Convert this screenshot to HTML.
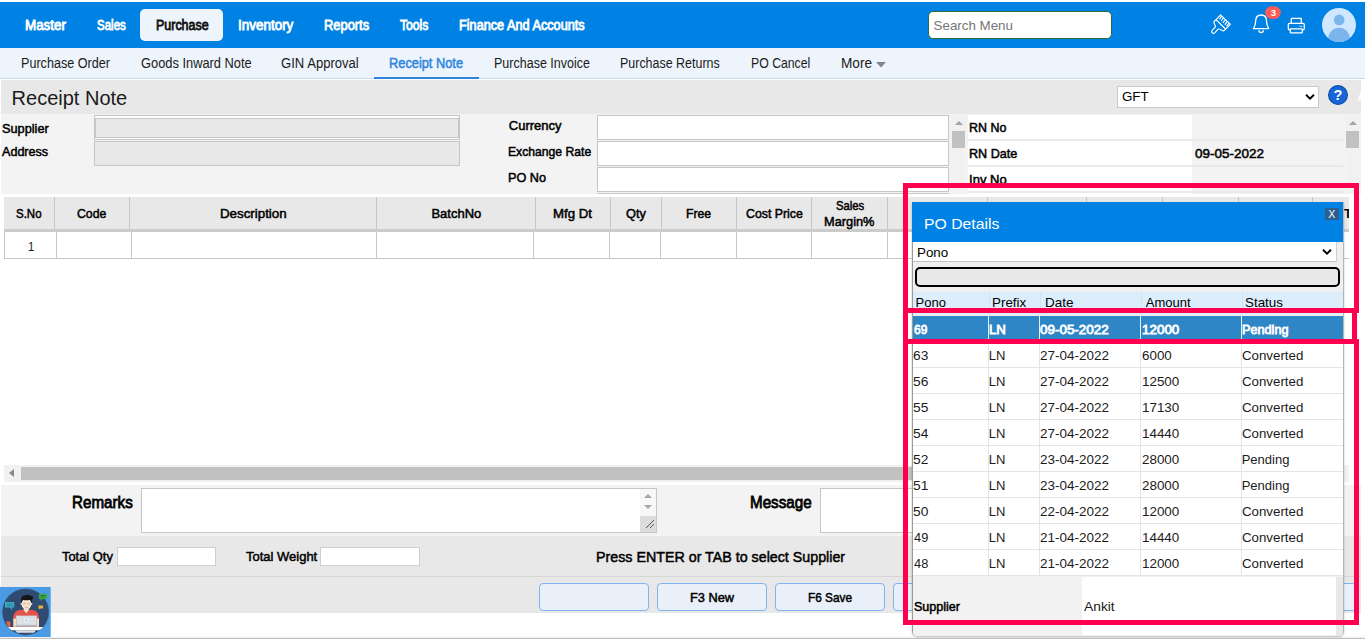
<!DOCTYPE html><html><head><meta charset="utf-8"><title>Receipt Note</title><style>
html,body{margin:0;padding:0;background:#fff;}
body{width:1365px;height:639px;position:relative;overflow:hidden;font-family:'Liberation Sans', sans-serif;}
.b{position:absolute;box-sizing:border-box;}
.t{position:absolute;white-space:pre;line-height:normal;font-family:'Liberation Sans', sans-serif;transform-origin:0 0;}
svg{position:absolute;overflow:visible}
.sb{-webkit-text-stroke:0.5px currentColor;}
.xb{-webkit-text-stroke:0.8px currentColor;}
</style></head><body>
<div class="b" style="left:0px;top:2px;width:1365px;height:46px;background:#0082e4"></div>
<div class="b" style="left:140px;top:9px;width:83px;height:32px;background:#edf4fc;border-radius:5px"></div>
<div class="b" style="left:928px;top:11px;width:184px;height:28px;background:#fff;border:1px solid #2e6b3a;border-radius:5px"></div>
<div class="t" style="left:933.6px;top:18px;font-size:13.33px;color:#757575">Search Menu</div>
<div class="b" style="left:0px;top:48px;width:1365px;height:30px;background:#edf4fc"></div>
<div class="b" style="left:0px;top:78px;width:1365px;height:1px;background:#c9dbe6"></div>
<div class="b" style="left:0px;top:79px;width:1365px;height:1px;background:#fafcfd"></div>
<div class="b" style="left:374px;top:77px;width:105px;height:2px;background:#2e86de"></div>
<svg style="left:875.5px;top:62px" width="10" height="6"><path d="M0 0h10l-5 5.6z" fill="#7d8590"/></svg>
<div class="b" style="left:1px;top:80px;width:1360px;height:34px;background:#e8e8e8"></div>
<div class="b" style="left:1117px;top:86px;width:202px;height:22px;background:#fff;border:1px solid #c9c9c9"></div>
<div class="t" style="left:1122px;top:89px;font-size:13.33px;color:#000">GFT</div>
<svg style="left:1305px;top:94px" width="10" height="6"><path d="M1 0.8L5 4.6L9 0.8" fill="none" stroke="#000" stroke-width="1.9"/></svg>
<svg style="left:1328px;top:85px" width="20" height="20"><circle cx="10" cy="10" r="9.4" fill="#1666d8" stroke="#0e4fae" stroke-width="1.2"/><text x="10" y="15.2" text-anchor="middle" font-family="Liberation Sans, sans-serif" font-weight="700" font-size="14.5" fill="#fff">?</text></svg>
<svg style="left:1357px;top:88px" width="5" height="14"><path d="M4 1.5 L2.8 6 L1 12.6 L4 12.6 Z" fill="#fff"/></svg>
<div class="b" style="left:1px;top:114px;width:1360px;height:80px;background:#f3f3f3"></div>
<div class="b" style="left:94px;top:115px;width:366px;height:25px;background:#fff;border:1px solid #c6c6c6"></div>
<div class="b" style="left:95px;top:118px;width:364px;height:20px;background:#e8e8e8;border:1px solid #c6c6c6"></div>
<div class="b" style="left:94px;top:141px;width:366px;height:25px;background:#e8e8e8;border:1px solid #c6c6c6"></div>
<div class="b" style="left:597px;top:115px;width:352px;height:25px;background:#fff;border:1px solid #c6c6c6"></div>
<div class="b" style="left:597px;top:141px;width:352px;height:25px;background:#fff;border:1px solid #c6c6c6"></div>
<div class="b" style="left:597px;top:167px;width:352px;height:25px;background:#fff;border:1px solid #c6c6c6"></div>
<div class="b" style="left:597px;top:193px;width:352px;height:1px;background:#c6c6c6"></div>
<div class="b" style="left:951px;top:114px;width:15px;height:80px;background:#f1f1f1"></div>
<div class="b" style="left:952px;top:131px;width:13px;height:17px;background:#c1c1c1"></div>
<svg style="left:955px;top:121px" width="8" height="4"><path d="M0 4L4 0L8 4z" fill="#a3a3a3"/></svg>
<div class="b" style="left:968px;top:115px;width:224px;height:24px;background:#fff"></div>
<div class="b" style="left:968px;top:139px;width:375px;height:2px;background:#e9e9e9"></div>
<div class="b" style="left:968px;top:141px;width:224px;height:24px;background:#fff"></div>
<div class="b" style="left:968px;top:165px;width:375px;height:2px;background:#e9e9e9"></div>
<div class="b" style="left:968px;top:167px;width:224px;height:24px;background:#fff"></div>
<div class="b" style="left:968px;top:191px;width:375px;height:2px;background:#e9e9e9"></div>
<div class="b" style="left:968px;top:193px;width:224px;height:1px;background:#fff"></div>
<div class="b" style="left:1346px;top:114px;width:14px;height:80px;background:#f1f1f1"></div>
<div class="b" style="left:1346px;top:131px;width:13px;height:17px;background:#c1c1c1"></div>
<svg style="left:1349px;top:121px" width="8" height="4"><path d="M0 4L4 0L8 4z" fill="#a3a3a3"/></svg>
<div class="b" style="left:4px;top:197px;width:1345px;height:32px;background:#e8e8e8"></div>
<div class="b" style="left:54px;top:197px;width:1px;height:32px;background:#c6c6c6"></div>
<div class="b" style="left:129px;top:197px;width:1px;height:32px;background:#c6c6c6"></div>
<div class="b" style="left:376px;top:197px;width:1px;height:32px;background:#c6c6c6"></div>
<div class="b" style="left:535px;top:197px;width:1px;height:32px;background:#c6c6c6"></div>
<div class="b" style="left:610px;top:197px;width:1px;height:32px;background:#c6c6c6"></div>
<div class="b" style="left:661px;top:197px;width:1px;height:32px;background:#c6c6c6"></div>
<div class="b" style="left:736px;top:197px;width:1px;height:32px;background:#c6c6c6"></div>
<div class="b" style="left:811px;top:197px;width:1px;height:32px;background:#c6c6c6"></div>
<div class="b" style="left:887px;top:197px;width:1px;height:32px;background:#c6c6c6"></div>
<div class="b" style="left:987px;top:197px;width:1px;height:32px;background:#c6c6c6"></div>
<div class="b" style="left:1086px;top:197px;width:1px;height:32px;background:#c6c6c6"></div>
<div class="b" style="left:1162px;top:197px;width:1px;height:32px;background:#c6c6c6"></div>
<div class="b" style="left:1238px;top:197px;width:1px;height:32px;background:#c6c6c6"></div>
<div class="b" style="left:1312px;top:197px;width:1px;height:32px;background:#c6c6c6"></div>
<div class="b" style="left:4px;top:229px;width:1345px;height:3px;background:#cbcbcb"></div>
<div class="b" style="left:4px;top:232px;width:1345px;height:27px;background:#fff;border-left:1px solid #c6c6c6;border-bottom:1px solid #c6c6c6"></div>
<div class="b" style="left:56px;top:232px;width:1px;height:26px;background:#c6c6c6"></div>
<div class="b" style="left:131px;top:232px;width:1px;height:26px;background:#c6c6c6"></div>
<div class="b" style="left:376px;top:232px;width:1px;height:26px;background:#c6c6c6"></div>
<div class="b" style="left:533px;top:232px;width:1px;height:26px;background:#c6c6c6"></div>
<div class="b" style="left:609px;top:232px;width:1px;height:26px;background:#c6c6c6"></div>
<div class="b" style="left:660px;top:232px;width:1px;height:26px;background:#c6c6c6"></div>
<div class="b" style="left:736px;top:232px;width:1px;height:26px;background:#c6c6c6"></div>
<div class="b" style="left:811px;top:232px;width:1px;height:26px;background:#c6c6c6"></div>
<div class="b" style="left:887px;top:232px;width:1px;height:26px;background:#c6c6c6"></div>
<div class="b" style="left:987px;top:232px;width:1px;height:26px;background:#c6c6c6"></div>
<div class="b" style="left:1086px;top:232px;width:1px;height:26px;background:#c6c6c6"></div>
<div class="b" style="left:1162px;top:232px;width:1px;height:26px;background:#c6c6c6"></div>
<div class="b" style="left:1238px;top:232px;width:1px;height:26px;background:#c6c6c6"></div>
<div class="b" style="left:1312px;top:232px;width:1px;height:26px;background:#c6c6c6"></div>
<div class="t" style="left:1344px;top:206px;font-size:13px;font-weight:700;color:#000">Ta</div>
<div class="b" style="left:1349px;top:197px;width:12px;height:40px;background:#fff"></div>
<div class="b" style="left:4px;top:465px;width:1345px;height:17px;background:#f1f1f1"></div>
<div class="b" style="left:21px;top:467px;width:1300px;height:13px;background:#c1c1c1"></div>
<svg style="left:9px;top:469px" width="5" height="8"><path d="M5 0L0 4L5 8z" fill="#8a8a8a"/></svg>
<div class="b" style="left:1px;top:485px;width:1360px;height:51px;background:#f3f3f3"></div>
<div class="b" style="left:141px;top:488px;width:516px;height:45px;background:#fff;border:1px solid #c6c6c6"></div>
<div class="b" style="left:640px;top:489px;width:16px;height:43px;background:#f7f7f7"></div>
<div class="b" style="left:640px;top:516px;width:16px;height:16px;background:#dcdcdc"></div>
<svg style="left:644px;top:494px" width="8" height="16"><path d="M0 4L4 0L8 4z M0 11L4 15L8 11z" fill="#a8a8a8"/></svg>
<svg style="left:645px;top:519px" width="10" height="10"><path d="M1 9L9 1M5 9L9 5" stroke="#555" stroke-width="1" fill="none"/></svg>
<div class="b" style="left:820px;top:488px;width:500px;height:45px;background:#fff;border:1px solid #c6c6c6"></div>
<div class="b" style="left:1px;top:536px;width:1360px;height:41px;background:#e8e8e8"></div>
<div class="b" style="left:1px;top:576px;width:1360px;height:1px;background:#d6d6d6"></div>
<div class="b" style="left:117px;top:547px;width:99px;height:19px;background:#fff;border:1px solid #cfcfcf"></div>
<div class="b" style="left:320px;top:547px;width:100px;height:19px;background:#fff;border:1px solid #cfcfcf"></div>
<div class="b" style="left:1px;top:577px;width:1360px;height:36px;background:#e8e8e8"></div>
<div class="b" style="left:539px;top:583px;width:110px;height:28px;background:#eaf0fa;border:1px solid #7fb3f2;border-radius:4px"></div>
<div class="b" style="left:657px;top:583px;width:110px;height:28px;background:#eaf0fa;border:1px solid #7fb3f2;border-radius:4px"></div>
<div class="b" style="left:775px;top:583px;width:110px;height:28px;background:#eaf0fa;border:1px solid #7fb3f2;border-radius:4px"></div>
<div class="b" style="left:893px;top:583px;width:110px;height:28px;background:#eaf0fa;border:1px solid #7fb3f2;border-radius:4px"></div>
<div class="b" style="left:1011px;top:583px;width:110px;height:28px;background:#eaf0fa;border:1px solid #7fb3f2;border-radius:4px"></div>
<div class="b" style="left:1129px;top:583px;width:110px;height:28px;background:#eaf0fa;border:1px solid #7fb3f2;border-radius:4px"></div>
<div class="b" style="left:1247px;top:583px;width:110px;height:28px;background:#eaf0fa;border:1px solid #7fb3f2;border-radius:4px"></div>
<div class="b" style="left:0px;top:637px;width:1365px;height:1px;background:#efefef"></div>
<div class="b" style="left:0px;top:638px;width:1365px;height:1px;background:#c2c2c2"></div>
<!--TEXTS-->
<div class="t xb" style="left:24.84px;top:17px;font-size:14px;color:#ffffff;transform:scaleX(0.957);">Master</div>
<div class="t xb" style="left:96.80px;top:17px;font-size:14px;color:#ffffff;transform:scaleX(0.823);">Sales</div>
<div class="t xb" style="left:155.51px;top:17px;font-size:14px;color:#111111;transform:scaleX(0.890);">Purchase</div>
<div class="t xb" style="left:238.24px;top:17px;font-size:14px;color:#ffffff;transform:scaleX(0.961);">Inventory</div>
<div class="t xb" style="left:323.88px;top:17px;font-size:14px;color:#ffffff;transform:scaleX(0.921);">Reports</div>
<div class="t xb" style="left:400.40px;top:17px;font-size:14px;color:#ffffff;transform:scaleX(0.867);">Tools</div>
<div class="t xb" style="left:458.89px;top:17px;font-size:14px;color:#ffffff;transform:scaleX(0.907);">Finance And Accounts</div>
<div class="t" style="left:20.50px;top:55px;font-size:14px;color:#1b1b1b;transform:scaleX(0.900);">Purchase Order</div>
<div class="t" style="left:140.88px;top:55px;font-size:14px;color:#1b1b1b;transform:scaleX(0.918);">Goods Inward Note</div>
<div class="t" style="left:280.87px;top:55px;font-size:14px;color:#1b1b1b;transform:scaleX(0.934);">GIN Approval</div>
<div class="t sb" style="left:389.49px;top:55px;font-size:14px;color:#2e86de;transform:scaleX(0.915);">Receipt Note</div>
<div class="t" style="left:493.91px;top:55px;font-size:14px;color:#1b1b1b;transform:scaleX(0.894);">Purchase Invoice</div>
<div class="t" style="left:620.31px;top:55px;font-size:14px;color:#1b1b1b;transform:scaleX(0.890);">Purchase Returns</div>
<div class="t" style="left:750.92px;top:55px;font-size:14px;color:#1b1b1b;transform:scaleX(0.876);">PO Cancel</div>
<div class="t" style="left:840.83px;top:55px;font-size:14px;color:#1b1b1b;transform:scaleX(0.973);">More</div>
<div class="t" style="left:11.62px;top:87px;font-size:20px;color:#1b1b1b;">Receipt Note</div>
<div class="t sb" style="left:2.00px;top:121px;font-size:13px;color:#000000;transform:scaleX(0.979);">Supplier</div>
<div class="t sb" style="left:2.00px;top:144px;font-size:13px;color:#000000;transform:scaleX(0.967);">Address</div>
<div class="t sb" style="left:508.80px;top:118px;font-size:13px;color:#000000;">Currency</div>
<div class="t sb" style="left:507.86px;top:144px;font-size:13px;color:#000000;transform:scaleX(0.936);">Exchange Rate</div>
<div class="t sb" style="left:507.83px;top:170px;font-size:13px;color:#000000;transform:scaleX(0.974);">PO No</div>
<div class="t sb" style="left:969.14px;top:120px;font-size:13px;color:#000000;transform:scaleX(0.958);">RN No</div>
<div class="t sb" style="left:969.13px;top:146px;font-size:13px;color:#000000;transform:scaleX(0.969);">RN Date</div>
<div class="t sb" style="left:969.10px;top:172px;font-size:13px;color:#000000;">Inv No</div>
<div class="t sb" style="left:1195.10px;top:146px;font-size:13px;color:#000000;transform:scaleX(1.036);">09-05-2022</div>
<div class="t sb" style="left:16.40px;top:206px;font-size:13px;color:#000000;transform:scaleX(0.883);">S.No</div>
<div class="t sb" style="left:77.40px;top:206px;font-size:13px;color:#000000;transform:scaleX(0.942);">Code</div>
<div class="t sb" style="left:219.78px;top:206px;font-size:13px;color:#000000;transform:scaleX(1.025);">Description</div>
<div class="t sb" style="left:431.41px;top:206px;font-size:13px;color:#000000;">BatchNo</div>
<div class="t sb" style="left:553.38px;top:206px;font-size:13px;color:#000000;transform:scaleX(1.016);">Mfg Dt</div>
<div class="t sb" style="left:626.40px;top:206px;font-size:13px;color:#000000;transform:scaleX(0.981);">Qty</div>
<div class="t sb" style="left:686.26px;top:206px;font-size:13px;color:#000000;transform:scaleX(0.938);">Free</div>
<div class="t sb" style="left:746.20px;top:206px;font-size:13px;color:#000000;transform:scaleX(0.947);">Cost Price</div>
<div class="t sb" style="left:835.80px;top:198px;font-size:13px;color:#000000;transform:scaleX(0.869);">Sales</div>
<div class="t sb" style="left:824.22px;top:214px;font-size:13px;color:#000000;transform:scaleX(0.984);">Margin%</div>
<div class="t" style="left:27.53px;top:239px;font-size:13px;color:#1b1b1b;transform:scaleX(0.867);">1</div>
<div class="t xb" style="left:71.91px;top:493px;font-size:17px;color:#000000;transform:scaleX(0.893);">Remarks</div>
<div class="t xb" style="left:750.31px;top:493px;font-size:17px;color:#000000;transform:scaleX(0.893);">Message</div>
<div class="t sb" style="left:61.80px;top:549px;font-size:13.5px;color:#000000;transform:scaleX(0.954);">Total Qty</div>
<div class="t sb" style="left:245.50px;top:549px;font-size:13.5px;color:#000000;transform:scaleX(0.962);">Total Weight</div>
<div class="t sb" style="left:596.28px;top:548px;font-size:15.5px;color:#000000;transform:scaleX(0.920);">Press ENTER or TAB to select Supplier</div>
<div class="t sb" style="left:689.82px;top:590px;font-size:13px;color:#000000;transform:scaleX(0.982);">F3 New</div>
<div class="t sb" style="left:808.09px;top:590px;font-size:13px;color:#000000;transform:scaleX(0.911);">F6 Save</div>

<svg style="left:0;top:0" width="1365" height="50" viewBox="0 0 1365 50">
 <g fill="none" stroke="#fff" stroke-width="1.3" stroke-linejoin="round" stroke-linecap="round">
  <g transform="translate(1221.2 24.2) scale(0.93) translate(-1221.2 -24.2)" stroke-width="1.25">
  <path d="M1220.5 14.1 L1231 24.4 L1225.7 29.8 C1224.8 31.2 1223.6 31.6 1222.4 31 C1221 30 1219.3 29 1217.9 29.4 L1214.4 33.3 C1213.3 34.4 1211.8 34.2 1211.2 33.2 C1210.6 32.2 1210.8 31.4 1211.6 30.6 L1214.9 27.4 C1215.2 26 1214.3 24.6 1213.6 23.2 C1213 21.8 1213.6 20.8 1215 20 Z"/>
  <path d="M1215.8 19.5 L1225.6 29.1"/>
  <path d="M1221.5 15.8 L1219.6 18.4 M1223.4 17.8 L1221.4 20.3 M1225.4 19.8 L1223.4 22.3 M1227.3 21.8 L1225.4 24.3 M1229.2 23.7 L1227.3 26"/>
  </g>
  <path transform="translate(1261.1 0) scale(0.94 1) translate(-1261.1 0)" d="M1261.1 15 C1257.6 15 1255.5 17.4 1255.4 20.6 C1255.3 24.2 1254.6 26.4 1253 28.6 L1269.2 28.6 C1267.6 26.4 1266.9 24.2 1266.8 20.6 C1266.7 17.4 1264.6 15 1261.1 15 Z" stroke-width="1.4"/>
  <path d="M1259 30.6 C1259 33.4 1263.2 33.4 1263.2 30.6" stroke-width="1.3"/>
  <path d="M1291.3 23.4 V18.3 H1301.3 V23.4" stroke-width="1.3"/>
  <rect x="1288.3" y="23.4" width="16" height="6.4" rx="1.3" stroke-width="1.3"/>
  <rect x="1290.3" y="28.8" width="12" height="4" rx="0.6" fill="#0082e4" stroke-width="1.3"/>
  <path d="M1299.6 26.3 h0.6 M1301.4 26.3 h0.6" stroke-width="0.9"/>
 </g>
 <ellipse cx="1273" cy="12.5" rx="7.9" ry="6.6" fill="#ff5b57"/>
 <text x="1273.4" y="16" text-anchor="middle" font-family="Liberation Sans, sans-serif" font-weight="700" font-size="9.6" fill="#fff">3</text>
 <clipPath id="avc"><circle cx="1339" cy="25" r="17"/></clipPath>
 <circle cx="1339" cy="25" r="17" fill="#cfe7ff"/>
 <g clip-path="url(#avc)" fill="#7ab5ee">
  <circle cx="1339.2" cy="19.9" r="5.3"/>
  <ellipse cx="1339.1" cy="38.6" rx="10.8" ry="10.9"/>
 </g>
</svg>


<svg style="left:0;top:587px" width="51" height="50" viewBox="0 0 51 50">
 <rect width="50.7" height="50" fill="#4a9be3"/>
 <clipPath id="hc"><circle cx="25.6" cy="24.9" r="23.2"/></clipPath>
 <circle cx="25.6" cy="24.9" r="23.5" fill="#3f6a9c"/>
 <circle cx="25.6" cy="24.9" r="22.9" fill="#2f4b72"/>
 <g clip-path="url(#hc)">
  <path d="M13.2 31 C13.2 25.6 16.4 23 21 22.7 L31 22.7 C35.8 23 39 25.6 39 31 V40 H13.2Z" fill="#e5534b"/>
  <path d="M23.8 20.4 h4.9 v3 l-2.45 2.9 l-2.45 -2.9z" fill="#f3dcc0"/>
  <ellipse cx="26.4" cy="17" rx="4.9" ry="5.7" fill="#f7e3cc"/>
  <circle cx="21.5" cy="17" r="1" fill="#f3dcc0"/><circle cx="31.4" cy="17" r="1" fill="#f3dcc0"/>
  <path d="M21.3 16 C20.6 11.4 21.4 8.6 24.6 8.5 C27 7.6 30.4 8 31.6 9.2 C33.4 9 33.2 11.6 32.2 12.6 C32 13.8 31.9 15 31.6 16 C31.2 14.2 30.6 13.2 29.8 12.8 C27.6 13.6 24.6 13.4 23.2 12.8 C22.2 13.6 21.8 14.8 21.3 16Z" fill="#151515"/>
  <path d="M23.2 16.6 h2.4 M27.4 16.6 h2.4" stroke="#8a7a6a" stroke-width="0.5"/>
  <path d="M25 20 q1.4 0.9 2.8 0" stroke="#a0705a" stroke-width="0.5" fill="none"/>
  <path d="M13.4 31.5 h2.9 v8.3 h-2.9z M36.3 31.5 h2.7 v8.3 h-2.7z" fill="#f5dfc6"/>
  <path d="M16 28.7 h20.8 l-0.5 9.4 h-19.8z" fill="#dce1e5" stroke="#b9c0c6" stroke-width="0.4"/>
  <circle cx="26.2" cy="33.3" r="2.1" fill="#f1f5fb"/>
  <circle cx="26.2" cy="33.3" r="0.9" fill="#78aef0"/>
  <path d="M15.6 38.1 h21.4 v1.6 h-21.4z" fill="#b5bbc0"/>
  <path d="M5 40 h41 v3.3 h-41z" fill="#ffffff"/>
  <path d="M15 43.3 h21 l-2 2.5 h-17z" fill="#d8dce0"/>
  <path d="M6.1 34.2 l4.3 0.6 v5 h-2.6z" fill="#e8683a"/>
 </g>
 <path d="M5 15.1 h9.2 v5.5 h-2.4 l0.4 2.6 l-2.6 -2.6 h-4.6z" fill="#3aa9c6"/>
 <path d="M6.8 17 h5.8 M6.8 18.7 h5.8" stroke="#2b7d94" stroke-width="0.8"/>
 <path d="M38.9 6.7 h8.3 v5.3 h-4.6 l-2.3 2 l0.3 -2 h-1.7z" fill="#3fa648"/>
 <path d="M40.8 8.6 h4.6 M40.8 10.1 h3" stroke="#1f6a28" stroke-width="0.8"/>
 <path d="M38.4 18.4 h4.7 v3 h-2.8 l-0.9 1.2 l-0.2 -1.2 h-0.8z" fill="#dcb634"/>
</svg>

<!--POPUP-->
<div class="b" style="left:912px;top:202px;width:432px;height:434px;background:#efefef;border-radius:0 0 5px 5px;border-right:1px solid #b5b5b5;border-left:1px solid #9a9a9a;border-bottom:1px solid #b5b5b5;box-shadow:0 1px 2px rgba(0,0,0,0.28)"></div>
<div class="b" style="left:912px;top:202px;width:431px;height:40px;background:#0082e4"></div>
<div class="b" style="left:1325px;top:208px;width:14px;height:12px;background:#2b5f8e"></div>
<div class="t" style="left:1328.3px;top:208px;font-size:10.5px;color:#fff">X</div>
<div class="b" style="left:913px;top:242px;width:424px;height:20px;background:#fff;border-bottom:1px solid #c4c4c4;border-right:1px solid #d0d0d0"></div>
<div class="t" style="left:917px;top:245px;font-size:13.33px;color:#000">Pono</div>
<svg style="left:1322px;top:249px" width="10" height="6"><path d="M1 0.8L5 4.6L9 0.8" fill="none" stroke="#000" stroke-width="1.9"/></svg>
<div class="b" style="left:915px;top:267px;width:425px;height:20px;background:#e8e8e8;border:2px solid #000;border-radius:5px"></div>
<div class="b" style="left:913px;top:292px;width:430px;height:24px;background:#dceefb"></div>
<div class="b" style="left:913px;top:315px;width:430px;height:1px;background:#f4efe6"></div>
<div class="b" style="left:913px;top:316px;width:430px;height:24px;background:#2e86c6"></div>
<div class="b" style="left:988px;top:316px;width:1px;height:24px;background:#e8f0f7"></div>
<div class="b" style="left:989px;top:292px;width:1px;height:23px;background:#d0e4f4"></div>
<div class="b" style="left:1039px;top:316px;width:1px;height:24px;background:#e8f0f7"></div>
<div class="b" style="left:1040px;top:292px;width:1px;height:23px;background:#d0e4f4"></div>
<div class="b" style="left:1140px;top:316px;width:1px;height:24px;background:#e8f0f7"></div>
<div class="b" style="left:1141px;top:292px;width:1px;height:23px;background:#d0e4f4"></div>
<div class="b" style="left:1241px;top:316px;width:1px;height:24px;background:#e8f0f7"></div>
<div class="b" style="left:1242px;top:292px;width:1px;height:23px;background:#d0e4f4"></div>
<div class="b" style="left:913px;top:341px;width:430px;height:235px;background:#fff"></div>
<div class="b" style="left:913px;top:341px;width:430px;height:1px;background:#e5e5e5"></div>
<div class="b" style="left:913px;top:367px;width:430px;height:1px;background:#e5e5e5"></div>
<div class="b" style="left:913px;top:393px;width:430px;height:1px;background:#e5e5e5"></div>
<div class="b" style="left:913px;top:419px;width:430px;height:1px;background:#e5e5e5"></div>
<div class="b" style="left:913px;top:445px;width:430px;height:1px;background:#e5e5e5"></div>
<div class="b" style="left:913px;top:471px;width:430px;height:1px;background:#e5e5e5"></div>
<div class="b" style="left:913px;top:497px;width:430px;height:1px;background:#e5e5e5"></div>
<div class="b" style="left:913px;top:523px;width:430px;height:1px;background:#e5e5e5"></div>
<div class="b" style="left:913px;top:549px;width:430px;height:1px;background:#e5e5e5"></div>
<div class="b" style="left:913px;top:575px;width:430px;height:1px;background:#e5e5e5"></div>
<div class="b" style="left:988px;top:341px;width:1px;height:235px;background:#e5e5e5"></div>
<div class="b" style="left:1039px;top:341px;width:1px;height:235px;background:#e5e5e5"></div>
<div class="b" style="left:1140px;top:341px;width:1px;height:235px;background:#e5e5e5"></div>
<div class="b" style="left:1241px;top:341px;width:1px;height:235px;background:#e5e5e5"></div>
<div class="b" style="left:913px;top:576px;width:430px;height:60px;background:#f2f2f2;border-radius:0 0 4px 4px"></div>
<div class="b" style="left:1082px;top:577px;width:254px;height:58px;background:#fff;border-radius:3px"></div>
<div class="b" style="left:1336px;top:577px;width:7px;height:59px;background:#e8e8e8;border-radius:0 0 4px 0"></div>
<div class="t" style="left:923.68px;top:215px;font-size:15.5px;color:#ffffff;transform:scaleX(1.018);">PO Details</div>
<div class="t" style="left:915.51px;top:295px;font-size:13px;color:#000000;">Pono</div>
<div class="t" style="left:991.77px;top:295px;font-size:13px;color:#000000;transform:scaleX(1.031);">Prefix</div>
<div class="t" style="left:1044.56px;top:295px;font-size:13px;color:#000000;transform:scaleX(1.038);">Date</div>
<div class="t" style="left:1145.80px;top:295px;font-size:13px;color:#000000;">Amount</div>
<div class="t" style="left:1244.57px;top:295px;font-size:13px;color:#000000;transform:scaleX(1.031);">Status</div>
<div class="t xb" style="left:913.60px;top:322px;font-size:13px;color:#ffffff;transform:scaleX(0.920);">69</div>
<div class="t xb" style="left:988.68px;top:322px;font-size:13px;color:#ffffff;transform:scaleX(1.020);">LN</div>
<div class="t xb" style="left:1040.00px;top:322px;font-size:13px;color:#ffffff;transform:scaleX(1.033);">09-05-2022</div>
<div class="t xb" style="left:1141.80px;top:322px;font-size:13px;color:#ffffff;transform:scaleX(1.033);">12000</div>
<div class="t xb" style="left:1241.63px;top:322px;font-size:13px;color:#ffffff;transform:scaleX(0.974);">Pending</div>
<div class="t sb" style="left:913.50px;top:599px;font-size:13px;color:#000000;transform:scaleX(0.963);">Supplier</div>
<div class="t" style="left:1084.00px;top:599px;font-size:13px;color:#1b1b1b;transform:scaleX(1.062);">Ankit</div>
<div class="t" style="left:913.34px;top:348px;font-size:13px;color:#1b1b1b;transform:scaleX(1.062);">63</div>
<div class="t" style="left:988.79px;top:348px;font-size:13px;color:#1b1b1b;">LN</div>
<div class="t" style="left:1040.46px;top:348px;font-size:13px;color:#1b1b1b;transform:scaleX(1.038);">27-04-2022</div>
<div class="t" style="left:1141.67px;top:348px;font-size:13px;color:#1b1b1b;transform:scaleX(1.029);">6000</div>
<div class="t" style="left:1241.68px;top:348px;font-size:13px;color:#1b1b1b;transform:scaleX(1.022);">Converted</div>
<div class="t" style="left:913.34px;top:374px;font-size:13px;color:#1b1b1b;transform:scaleX(1.062);">56</div>
<div class="t" style="left:988.79px;top:374px;font-size:13px;color:#1b1b1b;">LN</div>
<div class="t" style="left:1040.46px;top:374px;font-size:13px;color:#1b1b1b;transform:scaleX(1.038);">27-04-2022</div>
<div class="t" style="left:1141.67px;top:374px;font-size:13px;color:#1b1b1b;transform:scaleX(1.031);">12500</div>
<div class="t" style="left:1241.68px;top:374px;font-size:13px;color:#1b1b1b;transform:scaleX(1.022);">Converted</div>
<div class="t" style="left:913.34px;top:400px;font-size:13px;color:#1b1b1b;transform:scaleX(1.062);">55</div>
<div class="t" style="left:988.79px;top:400px;font-size:13px;color:#1b1b1b;">LN</div>
<div class="t" style="left:1040.46px;top:400px;font-size:13px;color:#1b1b1b;transform:scaleX(1.038);">27-04-2022</div>
<div class="t" style="left:1141.67px;top:400px;font-size:13px;color:#1b1b1b;transform:scaleX(1.031);">17130</div>
<div class="t" style="left:1241.68px;top:400px;font-size:13px;color:#1b1b1b;transform:scaleX(1.022);">Converted</div>
<div class="t" style="left:913.34px;top:426px;font-size:13px;color:#1b1b1b;transform:scaleX(1.062);">54</div>
<div class="t" style="left:988.79px;top:426px;font-size:13px;color:#1b1b1b;">LN</div>
<div class="t" style="left:1040.46px;top:426px;font-size:13px;color:#1b1b1b;transform:scaleX(1.038);">27-04-2022</div>
<div class="t" style="left:1141.67px;top:426px;font-size:13px;color:#1b1b1b;transform:scaleX(1.031);">14440</div>
<div class="t" style="left:1241.68px;top:426px;font-size:13px;color:#1b1b1b;transform:scaleX(1.022);">Converted</div>
<div class="t" style="left:913.34px;top:452px;font-size:13px;color:#1b1b1b;transform:scaleX(1.062);">52</div>
<div class="t" style="left:988.79px;top:452px;font-size:13px;color:#1b1b1b;">LN</div>
<div class="t" style="left:1040.46px;top:452px;font-size:13px;color:#1b1b1b;transform:scaleX(1.038);">23-04-2022</div>
<div class="t" style="left:1141.67px;top:452px;font-size:13px;color:#1b1b1b;transform:scaleX(1.031);">28000</div>
<div class="t" style="left:1241.70px;top:452px;font-size:13px;color:#1b1b1b;">Pending</div>
<div class="t" style="left:913.34px;top:478px;font-size:13px;color:#1b1b1b;transform:scaleX(1.062);">51</div>
<div class="t" style="left:988.79px;top:478px;font-size:13px;color:#1b1b1b;">LN</div>
<div class="t" style="left:1040.46px;top:478px;font-size:13px;color:#1b1b1b;transform:scaleX(1.038);">23-04-2022</div>
<div class="t" style="left:1141.67px;top:478px;font-size:13px;color:#1b1b1b;transform:scaleX(1.031);">28000</div>
<div class="t" style="left:1241.70px;top:478px;font-size:13px;color:#1b1b1b;">Pending</div>
<div class="t" style="left:913.34px;top:504px;font-size:13px;color:#1b1b1b;transform:scaleX(1.062);">50</div>
<div class="t" style="left:988.79px;top:504px;font-size:13px;color:#1b1b1b;">LN</div>
<div class="t" style="left:1040.46px;top:504px;font-size:13px;color:#1b1b1b;transform:scaleX(1.038);">22-04-2022</div>
<div class="t" style="left:1141.67px;top:504px;font-size:13px;color:#1b1b1b;transform:scaleX(1.031);">12000</div>
<div class="t" style="left:1241.68px;top:504px;font-size:13px;color:#1b1b1b;transform:scaleX(1.022);">Converted</div>
<div class="t" style="left:914.40px;top:530px;font-size:13px;color:#1b1b1b;transform:scaleX(0.986);">49</div>
<div class="t" style="left:988.79px;top:530px;font-size:13px;color:#1b1b1b;">LN</div>
<div class="t" style="left:1040.46px;top:530px;font-size:13px;color:#1b1b1b;transform:scaleX(1.038);">21-04-2022</div>
<div class="t" style="left:1141.67px;top:530px;font-size:13px;color:#1b1b1b;transform:scaleX(1.031);">14440</div>
<div class="t" style="left:1241.68px;top:530px;font-size:13px;color:#1b1b1b;transform:scaleX(1.022);">Converted</div>
<div class="t" style="left:914.40px;top:556px;font-size:13px;color:#1b1b1b;transform:scaleX(0.986);">48</div>
<div class="t" style="left:988.79px;top:556px;font-size:13px;color:#1b1b1b;">LN</div>
<div class="t" style="left:1040.46px;top:556px;font-size:13px;color:#1b1b1b;transform:scaleX(1.038);">21-04-2022</div>
<div class="t" style="left:1141.67px;top:556px;font-size:13px;color:#1b1b1b;transform:scaleX(1.031);">12000</div>
<div class="t" style="left:1241.68px;top:556px;font-size:13px;color:#1b1b1b;transform:scaleX(1.022);">Converted</div>
<div class="b" style="left:903px;top:183px;width:456px;height:130px;border:5px solid #ff0050"></div>
<div class="b" style="left:903px;top:339px;width:456px;height:286px;border:5px solid #ff0050"></div>
<div class="b" style="left:903px;top:308px;width:454px;height:36px;border:5px solid #ff0050"></div>
</body></html>
